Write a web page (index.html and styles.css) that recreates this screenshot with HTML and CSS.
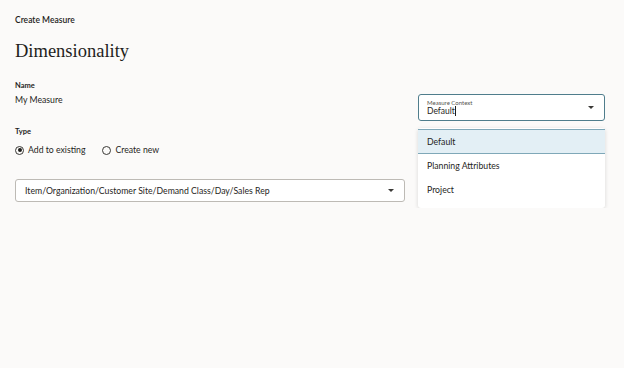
FILE: index.html
```html
<!DOCTYPE html>
<html>
<head>
<meta charset="utf-8">
<link rel="stylesheet" href="styles.css">
</head>
<body>
<div class="page">
  <div class="crumb">Create Measure</div>
  <h1 class="title">Dimensionality</h1>
  <div class="content">
    <div class="left">
      <div class="label name-label">Name</div>
      <div class="value">My Measure</div>
      <div class="label type-label">Type</div>
      <div class="radios">
        <label class="radio"><span class="dot checked"></span>Add to existing</label>
        <label class="radio"><span class="dot"></span>Create new</label>
      </div>
      <div class="select">
        <span>Item/Organization/Customer Site/Demand Class/Day/Sales Rep</span>
        <span class="caret"></span>
      </div>
    </div>
    <div class="right">
      <div class="combo">
        <div class="combo-text">
          <div class="combo-label">Measure Context</div>
          <div class="combo-value">Default<span class="cursor"></span></div>
        </div>
        <span class="caret"></span>
      </div>
      <ul class="menu">
        <li class="item active">Default</li>
        <li class="item">Planning Attributes</li>
        <li class="item">Project</li>
      </ul>
    </div>
  </div>
</div>
</body>
</html>
```

FILE: styles.css
```css
html, body {
  margin: 0;
  padding: 0;
  background: #fbfaf9;
}
body {
  font-family: Lato, "Noto Sans", sans-serif;
  color: #1f1e1c;
}
.page {
  padding: 14px 15px 0 15px;
}
.crumb {
  font-size: 8.5px;
  line-height: 12px;
  font-weight: 600;
}
.title {
  font-family: "Liberation Serif", "DejaVu Serif", serif;
  font-weight: 400;
  font-size: 18.5px;
  line-height: 24px;
  margin: 13px 0 0 0;
}
.content {
  display: grid;
  grid-template-columns: 390px 187px;
  column-gap: 13px;
  margin-top: 17px;
}
.label {
  font-size: 7.5px;
  font-weight: 700;
  line-height: 11px;
}
.name-label {
  margin-top: 0;
}
.value {
  font-size: 8.7px;
  line-height: 12px;
  margin-top: 3px;
}
.type-label {
  margin-top: 20px;
}
.radios {
  display: flex;
  gap: 17px;
  margin-top: 7px;
  font-size: 8.7px;
  line-height: 12px;
}
.radio {
  display: flex;
  align-items: center;
  gap: 4px;
}
.dot {
  width: 7px;
  height: 7px;
  border: 1px solid #3a3936;
  border-radius: 50%;
  position: relative;
  box-sizing: content-box;
}
.dot.checked::after {
  content: "";
  position: absolute;
  left: 1.5px;
  top: 1.5px;
  width: 4px;
  height: 4px;
  border-radius: 50%;
  background: #1f1e1c;
}
.select {
  margin-top: 23px;
  height: 21px;
  border: 1px solid #bdbab5;
  border-radius: 3px;
  background: #fff;
  display: flex;
  align-items: center;
  justify-content: space-between;
  padding: 0 10px 0 9px;
  font-size: 8.7px;
}
.caret {
  width: 0;
  height: 0;
  border-left: 3px solid transparent;
  border-right: 3px solid transparent;
  border-top: 3px solid #3a3936;
}
.combo {
  margin-top: 14px;
  height: 27px;
  box-sizing: border-box;
  border: 1.5px solid #4f7d8c;
  border-radius: 3px;
  background: #fff;
  display: flex;
  align-items: center;
  justify-content: space-between;
  padding: 0 10px 0 8px;
}
.combo-label {
  font-size: 6px;
  line-height: 7px;
  color: #55534f;
}
.combo-value {
  font-size: 8.5px;
  line-height: 11px;
  display: flex;
  align-items: center;
}
.cursor {
  display: inline-block;
  width: 1px;
  height: 10px;
  background: #1f1e1c;
}
.menu {
  list-style: none;
  margin: 7px 0 0 0;
  padding: 1px 0 6px 0;
  background: #fff;
  border-radius: 3px;
  box-shadow: 0 1px 4px rgba(0,0,0,0.14);
  font-size: 8.7px;
}
.item {
  height: 24px;
  line-height: 24px;
  padding-left: 9px;
}
.item.active {
  background: #e3eff5;
  border-top: 1px solid #7fa8b8;
  border-bottom: 1px solid #7fa8b8;
  height: 23px;
  line-height: 23px;
}
```
